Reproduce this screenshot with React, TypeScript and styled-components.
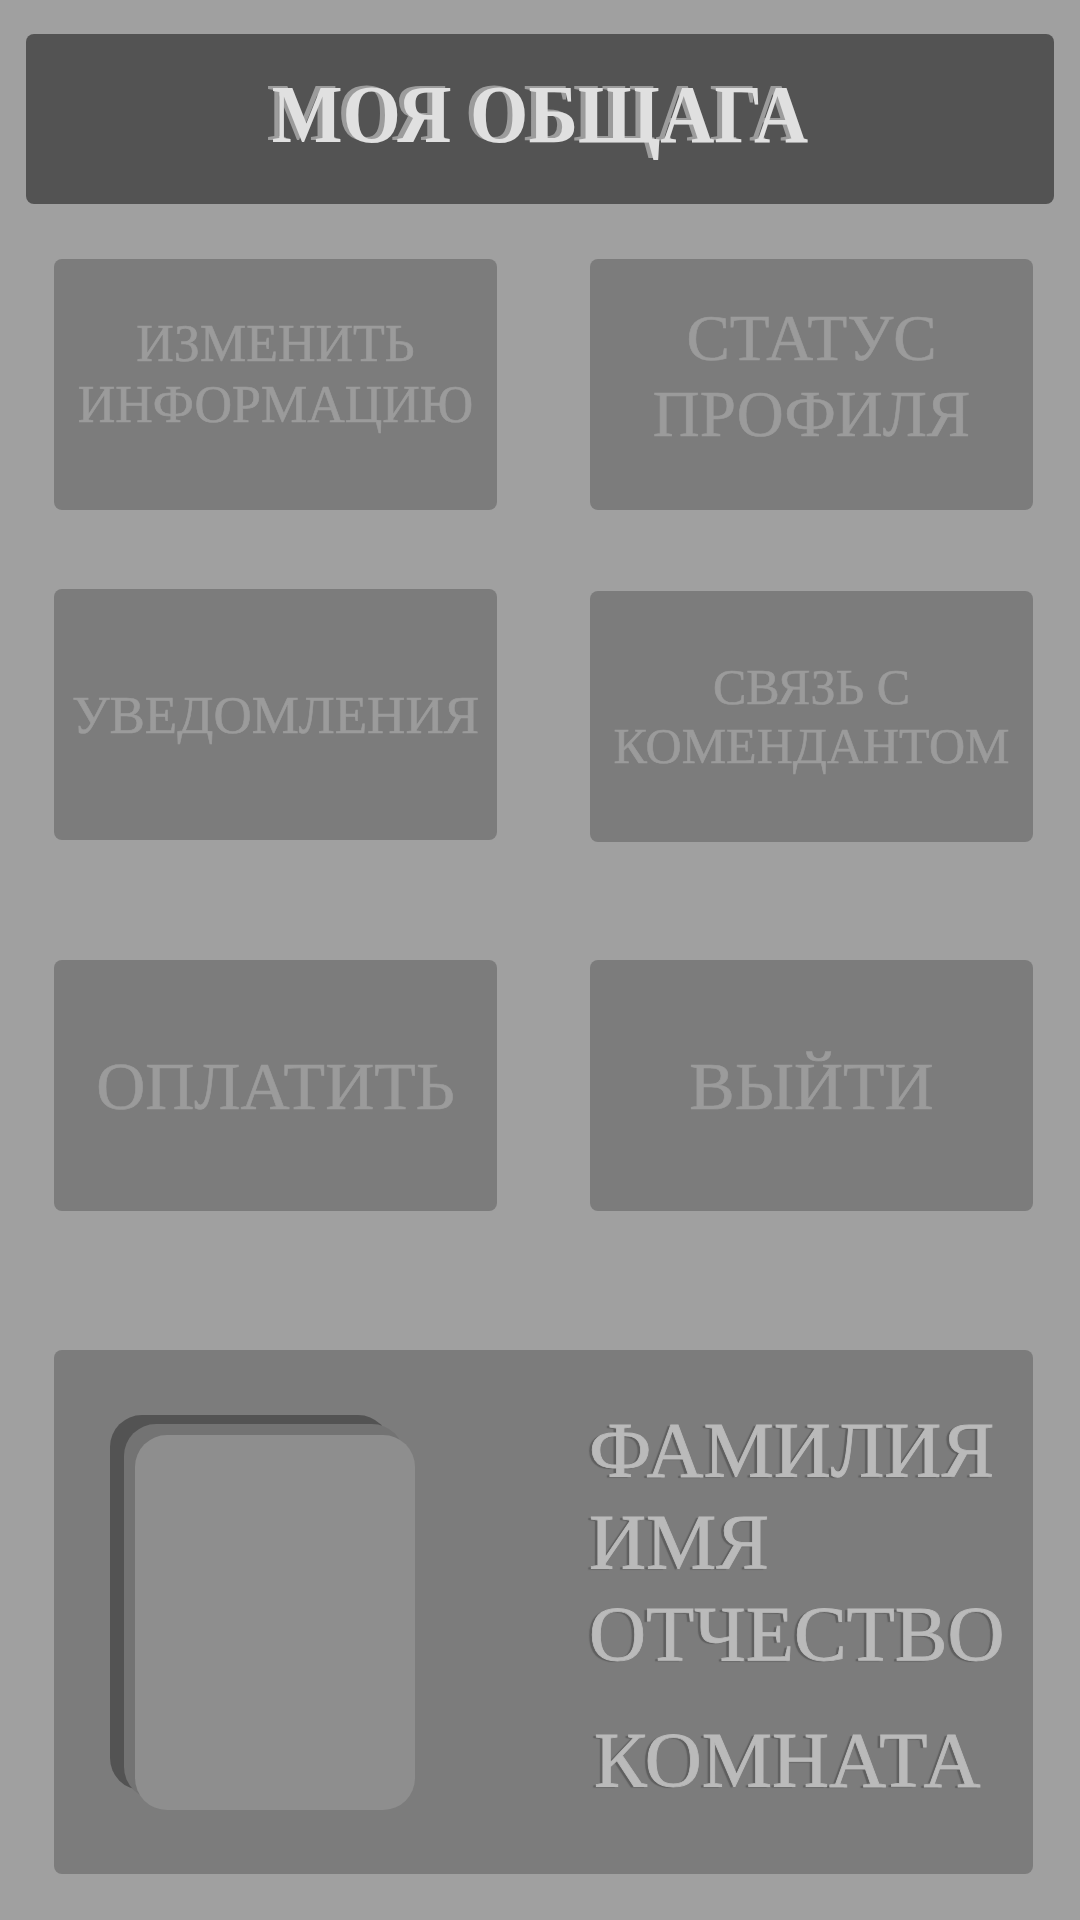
import React from "react";
import styled, { createGlobalStyle } from "styled-components";

const Global = createGlobalStyle`
  html, body {
    margin: 0;
    padding: 0;
    background: #a0a0a0;
  }
  body {
    font-family: "Liberation Serif", "Times New Roman", serif;
  }
`;

const Page = styled.div`
  width: 1080px;
  height: 1920px;
  box-sizing: border-box;
  padding: 34px 26px 0 26px;
  display: flex;
  flex-direction: column;
  background: #a0a0a0;
`;

const Header = styled.header`
  height: 170px;
  background: #535353;
  border-radius: 8px;
  display: flex;
  align-items: center;
  justify-content: center;
  padding-bottom: 12px;
  box-sizing: border-box;
`;

const Title = styled.h1`
  margin: 0;
  font-family: "Liberation Serif", "Times New Roman", serif;
  font-weight: 700;
  font-size: 75px;
  line-height: 1;
  letter-spacing: 0px;
  color: #e0e0e0;
  text-shadow: -5px -2px 0 #9c9c9c;
  transform: scaleY(1.11);
`;

const Row = styled.div<{ $top: number }>`
  display: grid;
  grid-template-columns: 443px 443px;
  column-gap: 93px;
  margin: ${(p) => p.$top}px 21px 0 28px;
`;

const Tile = styled.button<{ $size: number; $lift?: number; $shift?: number }>`
  height: 251px;
  border: none;
  border-radius: 8px;
  background: #7c7c7c;
  color: #9b9b9b;
  -webkit-text-stroke: 0.6px #9b9b9b;
  font-family: "Liberation Serif", "Times New Roman", serif;
  font-size: ${(p) => p.$size}px;
  line-height: ${(p) => Math.round(p.$size * 1.17)}px;
  text-transform: uppercase;
  display: flex;
  align-items: center;
  justify-content: center;
  text-align: center;
  padding: 0 0 ${(p) => p.$lift ?? 0}px 0;
  margin-top: ${(p) => p.$shift ?? 0}px;
  box-sizing: border-box;
  cursor: pointer;
`;

const Card = styled.section`
  margin: 139px 21px 0 28px;
  height: 524px;
  background: #7c7c7c;
  border-radius: 8px;
  display: flex;
  align-items: flex-start;
  box-sizing: border-box;
  padding: 85px 0 0 81px;
`;

const Photo = styled.div`
  width: 280px;
  height: 375px;
  border-radius: 32px;
  background: #8e8e8e;
  box-shadow: -11px -11px 0 #737373, -25px -20px 0 #535353;
  flex: none;
`;

const Info = styled.div`
  margin-left: 174px;
  margin-top: -31px;
  display: flex;
  flex-direction: column;
`;

const InfoLine = styled.div<{ $gap?: number; $indent?: number }>`
  font-family: "Liberation Serif", "Times New Roman", serif;
  font-size: 79px;
  line-height: 92px;
  color: #bababa;
  -webkit-text-stroke: 0.8px #bababa;
  text-shadow: -3px 1px 1px #5f5f5f;
  margin-top: ${(p) => p.$gap ?? 0}px;
  margin-left: ${(p) => p.$indent ?? 0}px;
`;

export default function App() {
  return (
    <>
      <Global />
      <Page>
        <Header>
          <Title>МОЯ ОБЩАГА</Title>
        </Header>
        <Row $top={55}>
          <Tile $size={52} $lift={22}>
            ИЗМЕНИТЬ
            <br />
            ИНФОРМАЦИЮ
          </Tile>
          <Tile $size={65} $lift={18}>
            СТАТУС
            <br />
            ПРОФИЛЯ
          </Tile>
        </Row>
        <Row $top={79}>
          <Tile $size={53}>УВЕДОМЛЕНИЯ</Tile>
          <Tile $size={50} $shift={2}>
            СВЯЗЬ С
            <br />
            КОМЕНДАНТОМ
          </Tile>
        </Row>
        <Row $top={118}>
          <Tile $size={68} $lift={-6}>ОПЛАТИТЬ</Tile>
          <Tile $size={68} $lift={-6}>ВЫЙТИ</Tile>
        </Row>
        <Card>
          <Photo />
          <Info>
            <InfoLine>ФАМИЛИЯ</InfoLine>
            <InfoLine>ИМЯ</InfoLine>
            <InfoLine>ОТЧЕСТВО</InfoLine>
            <InfoLine $gap={34} $indent={5}>
              КОМНАТА
            </InfoLine>
          </Info>
        </Card>
      </Page>
    </>
  );
}
